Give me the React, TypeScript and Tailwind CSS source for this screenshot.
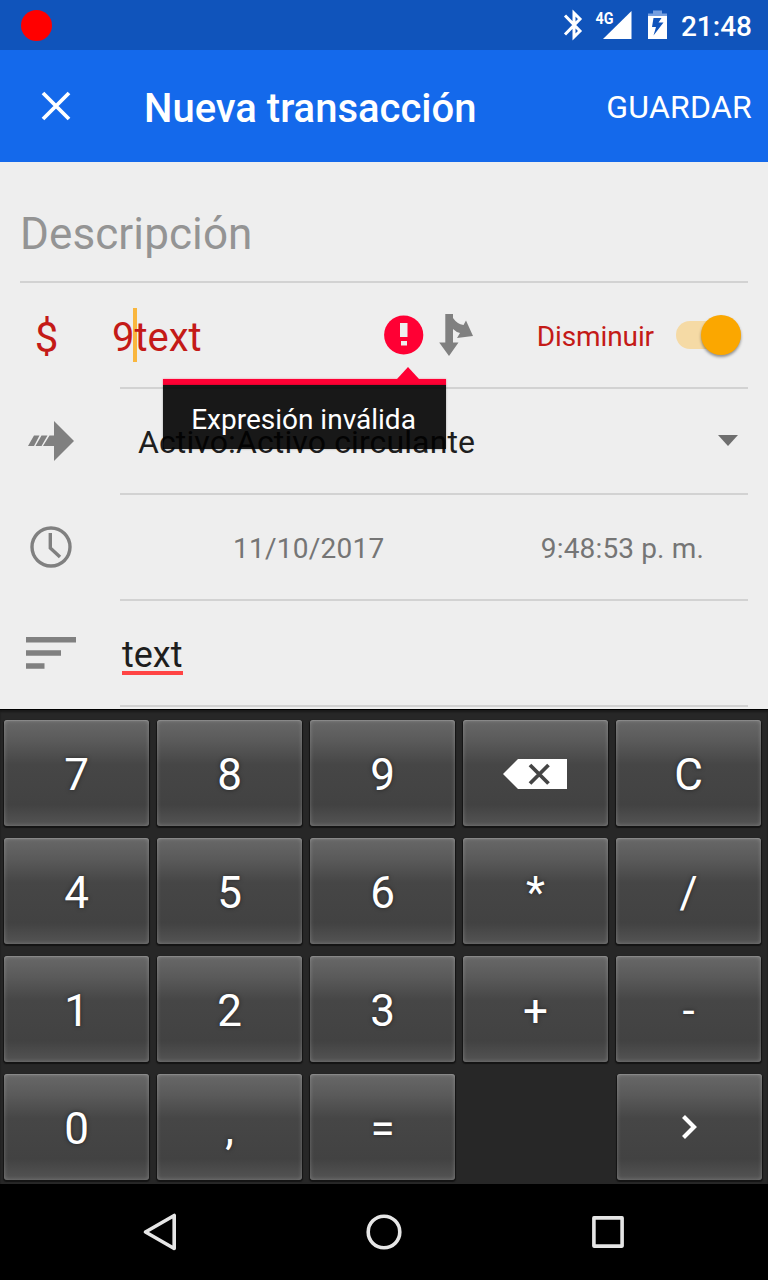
import type { ReactNode } from 'react';

function StatusBar() {
  return (
    <header className="flex h-[50px] items-center bg-[#1054bb] text-white">
      <div className="ml-[21px] size-[31px] rounded-full bg-[#ff0000]" />
      <svg className="ml-auto h-[50px] w-[106px]" viewBox="562 0 106 50" fill="none">
        <path d="M565 15.500L580 31L574 37V13L580 19L565 34.500" stroke="#fff" strokeWidth="3" />
        <path d="M631.500 11V39H603Z" fill="#fff" />
        <path d="M653 10.500h9v3h5v2.500h-19v-2.500h5Z" fill="#759fe0" />
        <path fillRule="evenodd" d="M648 16H667V39H648ZM653.500 18L652 27H656L653.500 35.500L663.500 22.500H658.500L661.500 18Z" fill="#fff" />
        <text x="595.500" y="23.500" fill="#fff" fontFamily="Roboto" fontSize="16.500" fontWeight="700" textLength="18" lengthAdjust="spacingAndGlyphs">4G</text>
      </svg>
      <span className="mr-[16px] ml-[13px] pt-[3px] text-[28px] font-medium">21:48</span>
    </header>
  );
}

function AppBar() {
  return (
    <div className="flex h-[112px] items-center bg-[#1469eb] text-white">
      <svg className="ml-[41px] size-[30px]" viewBox="0 0 30 30" stroke="#fff" strokeWidth="3.8">
        <path d="M2 2L28 28M28 2L2 28" />
      </svg>
      <h1 className="ml-[73px] pt-[6px] text-[40px] font-medium">Nueva transacción</h1>
      <button className="mr-[16px] ml-auto pt-[2px] text-[32px] tracking-[0.25px]">GUARDAR</button>
    </div>
  );
}

function Row({ icon, children }: { icon: ReactNode; children: ReactNode }) {
  return (
    <div className="flex h-[106px]">
      <div className="flex h-[104px] w-[102px] shrink-0 items-center justify-center">{icon}</div>
      <div className="ml-[18px] flex w-[628px] items-center border-b-2 border-[#d2d2d2]">{children}</div>
    </div>
  );
}

function Tooltip() {
  return (
    <div className="absolute top-[367px] left-[163px] w-[283px]">
      <svg className="ml-[234px] block h-[12px] w-[22px]" viewBox="0 0 22 12">
        <path d="M11 0L22 12H0Z" fill="#ff0034" />
      </svg>
      <div className="h-[6px] bg-[#ff0034] shadow-[0_0_2px_#ff003480]" />
      <div className="flex h-[64px] items-center justify-center bg-black/90 pt-[5px] pr-[2px] text-[28px] text-white shadow-[0_0_2px_#0000004d]">
        Expresión inválida
      </div>
    </div>
  );
}

function Form() {
  return (
    <main className="flex h-[547px] flex-col bg-[#eeeeee] text-[#1e1e1e]">
      <div className="mr-5 ml-5 flex h-[121px] shrink-0 items-center border-b-2 border-[#d2d2d2] pt-[25px] text-[44px] tracking-[0.1px] text-[#949494]">
        Descripción
      </div>
      <Row icon={<span className="mr-[9px] pt-[4px] text-[42px] text-[#c41a17]">$</span>}>
        <div className="relative -ml-[8px] pt-[5px] text-[40px] text-[#c41a17]">
          <span className="absolute top-[5px] left-[21px] h-[54px] w-[4px] bg-[#faab1ed9]" />
          <span className="relative">9text</span>
        </div>
        <svg className="mr-auto ml-[178px] h-[104px] w-[100px] shrink-0" viewBox="380 283 100 104">
          <circle cx="403.700" cy="335" r="19.600" fill="#ff0034" />
          <path d="M400 323H407.500V337H400ZM401 341H407V345.500H401Z" fill="#eee" />
          <path d="M445.300 314H453V318Q457 324 463.500 325L466 320.500L473 336L457 338L460 333Q456 332 453 329V342.500H458.500L449 356L439.200 342.500H445.300Z" fill="#808080" />
        </svg>
        <span className="pt-[3px] text-[28px] tracking-[-0.1px] text-[#c41a17]">Disminuir</span>
        <div className="mr-[7px] ml-[22px] flex h-[28px] w-[65px] items-center justify-end rounded-full bg-[#f5daa5]">
          <div className="size-[40px] shrink-0 rounded-full bg-[#fba700] shadow-[0_2px_3px_#00000066]" />
        </div>
      </Row>
      <Row
        icon={
          <svg className="h-[40px] w-[46px]" viewBox="28 421 46 40" fill="#808080">
            <path d="M54 421L74 441L54 461V446H43L49.500 435.500H54ZM34 435.500H39.500L34 446H28ZM41.500 435.500H47.500L41.500 446H35.500Z" />
          </svg>
        }
      >
        <span className="ml-[18px] pt-[2px] text-[32px] tracking-[0.12px]">Activo:Activo circulante</span>
        <svg className="mr-[10px] mb-[2px] ml-auto h-[11px] w-[20px]" viewBox="0 0 20 11">
          <path d="M0 0H20L10 11Z" fill="#6e6e6e" />
        </svg>
      </Row>
      <Row
        icon={
          <svg className="size-[42px]" viewBox="0 0 42 42" fill="none" stroke="#808080">
            <circle cx="21" cy="21" r="19" strokeWidth="3.400" />
            <path d="M20.300 7V22L30 31" strokeWidth="3.400" />
          </svg>
        }
      >
        <span className="ml-[113px] pt-[3px] text-[28px] tracking-[0.25px] text-[#757575]">11/10/2017</span>
        <span className="mr-[44px] ml-auto pt-[3px] text-[28px] tracking-[0.15px] text-[#757575]">9:48:53 p. m.</span>
      </Row>
      <Row
        icon={
          <svg className="h-[32px] w-[50px]" viewBox="0 0 50 32" fill="#808080">
            <path d="M0 0H50V5.500H0ZM0 13.200H35V18.700H0ZM0 26.200H18.500V31.700H0Z" />
          </svg>
        }
      >
        <div className="ml-[2px] flex flex-col pt-[4px] text-[36px] leading-[40px]">
          <span>text</span>
          <span className="-mt-[4px] h-[4px] bg-[#ff4444]" />
        </div>
      </Row>
    </main>
  );
}

const keyClass =
  'flex h-[106px] w-[145px] items-center justify-center rounded-[3px] bg-[linear-gradient(#686868_0%,#5a5a5a_20%,#464646_42%,#424242_80%,#545454_100%)] pt-[4px] text-[44px] text-white shadow-[inset_0_0_4px_#ffffff40,inset_0_1px_1px_#ffffff26,0_1px_1px_1px_#141414] [text-shadow:0_0_4px_#00000080]';

function Keyboard() {
  const keys = ['7', '8', '9', 'del', 'C', '4', '5', '6', '*', '/', '1', '2', '3', '+', '-', '0', ',', '='];
  return (
    <section className="h-[475px] border-t border-black bg-[#272727] pt-[10px] pl-[4px] shadow-[inset_0_2px_2px_#1a1a1a]">
      <div className="grid grid-cols-[repeat(5,145px)] gap-x-[8px] gap-y-[12px]">
        {keys.map((k) => (
          <button key={k} className={keyClass}>
            {k === 'del' ? (
              <svg className="mr-[2px] mb-[2px] h-[30px] w-[64px]" viewBox="0 0 64 30">
                <path d="M15 0H64V30H15L0 15Z" fill="#fff" />
                <path d="M27 6L45.500 24.500M45.500 6L27 24.500" stroke="#454545" strokeWidth="3.800" />
              </svg>
            ) : (
              k
            )}
          </button>
        ))}
        <button className={`${keyClass} col-start-5 ml-px`}>
          <svg className="mb-[4px] h-[24px] w-[15px]" viewBox="0 0 15 24" fill="none" stroke="#fff" strokeWidth="4.200">
            <path d="M1.500 1.500L12 12L1.500 22.500" />
          </svg>
        </button>
      </div>
    </section>
  );
}

function NavBar() {
  return (
    <nav className="h-[96px] bg-black">
      <svg className="h-[96px] w-[768px]" viewBox="0 1184 768 96" fill="none" stroke="#e6e6e6" strokeWidth="3.600" strokeLinejoin="round">
        <path d="M174.200 1215.500V1248.500L145.500 1232Z" />
        <circle cx="384" cy="1232" r="15.800" />
        <rect x="593.900" y="1217.900" width="28.200" height="28.200" />
      </svg>
    </nav>
  );
}

export default function App() {
  return (
    <div className="relative h-[1280px] w-[768px] overflow-hidden font-[Roboto,sans-serif]">
      <StatusBar />
      <AppBar />
      <Form />
      <Keyboard />
      <NavBar />
      <Tooltip />
    </div>
  );
}
